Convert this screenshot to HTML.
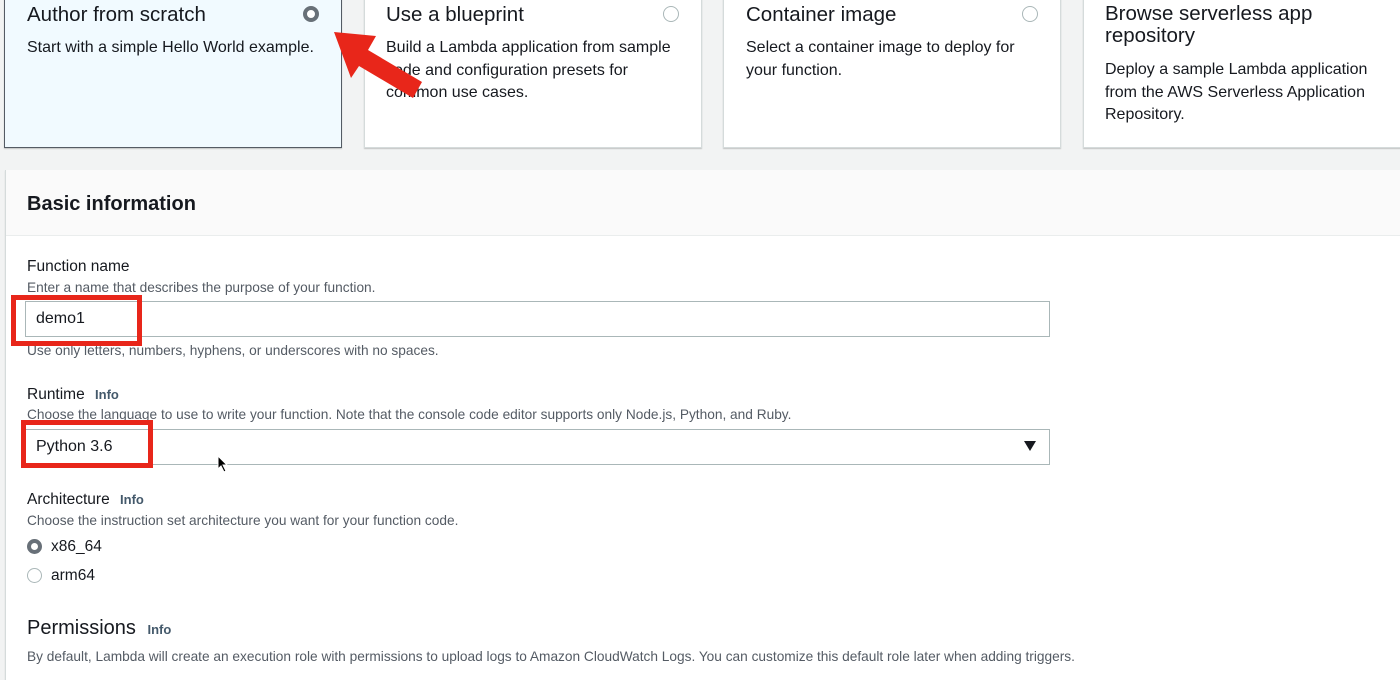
<!DOCTYPE html>
<html><head><style>
*{margin:0;padding:0;box-sizing:border-box}
body{width:1400px;height:671px;overflow:hidden;background:#f2f3f3;font-family:"Liberation Sans",sans-serif;color:#16191f;position:relative}
.a{position:absolute;white-space:nowrap}
.card{position:absolute;top:-10px;height:158px;background:#fff;border:1px solid #d5dbdb;box-shadow:0 1px 1px rgba(0,0,0,.2)}
.ct{font-size:20.5px;color:#16191f}
.cd{font-size:16px;line-height:22.5px;color:#16191f}
.rad{position:absolute;width:16px;height:16px;border-radius:50%;border:1.5px solid #aab7b8;background:#fff}
.rsel{border:4px solid #687078}
.lbl{font-size:15.5px;color:#16191f}
.hint{font-size:13.7px;color:#545b64}
.info{font-size:13px;font-weight:bold;color:#44596b}
.inp{position:absolute;left:25px;width:1025px;height:36px;border:1px solid #aab7b8;background:#fff}
.red{position:absolute;border:5px solid #e8261a}
</style></head><body>
<div class="card" style="left:4px;width:338px;background:#f1faff;border:1px solid #545b64"></div>
<div class="card" style="left:364px;width:338px"></div>
<div class="card" style="left:723px;width:338px"></div>
<div class="card" style="left:1083px;width:330px"></div>
<div class="a ct" style="left:27px;top:3px">Author from scratch</div>
<div class="rad rsel" style="left:303px;top:6px"></div>
<div class="a cd" style="left:27px;top:37px">Start with a simple Hello World example.</div>
<div class="a ct" style="left:386px;top:3px">Use a blueprint</div>
<div class="rad" style="left:663px;top:6px"></div>
<div class="a cd" style="left:386px;top:37px">Build a Lambda application from sample<br>code and configuration presets for<br>common use cases.</div>
<div class="a ct" style="left:746px;top:3px">Container image</div>
<div class="rad" style="left:1022px;top:6px"></div>
<div class="a cd" style="left:746px;top:37px">Select a container image to deploy for<br>your function.</div>
<div class="a ct" style="left:1105px;top:3px;line-height:22px">Browse serverless app<br>repository</div>
<div class="a cd" style="left:1105px;top:59px">Deploy a sample Lambda application<br>from the AWS Serverless Application<br>Repository.</div>

<div class="a" style="left:5px;top:170px;width:1400px;height:510px;background:#fff;border-left:1px solid #d5dbdb;box-shadow:0 1px 1px rgba(0,0,0,.15)"></div>
<div class="a" style="left:6px;top:170px;width:1400px;height:66px;background:#fafafa;border-bottom:1px solid #eaeded"></div>
<div class="a" style="left:27px;top:193px;font-size:20px;font-weight:bold">Basic information</div>

<div class="a lbl" style="left:27px;top:258px">Function name</div>
<div class="a hint" style="left:27px;top:280px">Enter a name that describes the purpose of your function.</div>
<div class="inp" style="top:301px"></div>
<div class="a" style="left:36px;top:310px;font-size:16px">demo1</div>
<div class="a hint" style="left:27px;top:343px">Use only letters, numbers, hyphens, or underscores with no spaces.</div>

<div class="a lbl" style="left:27px;top:386px">Runtime <span class="info" style="margin-left:6px">Info</span></div>
<div class="a hint" style="left:27px;top:407px">Choose the language to use to write your function. Note that the console code editor supports only Node.js, Python, and Ruby.</div>
<div class="inp" style="top:429px"></div>
<div class="a" style="left:36px;top:438px;font-size:16px">Python 3.6</div>
<div class="a" style="left:1024px;top:441px;width:0;height:0;border-left:6px solid transparent;border-right:6px solid transparent;border-top:10px solid #16191f"></div>
<svg class="a" style="left:217px;top:455px" width="12" height="18" viewBox="0 0 12 18"><path d="M1 1 L1 14 L4 11 L7 17 L9 16 L6 10 L10 10 Z" fill="#000" stroke="#fff" stroke-width="1"/></svg>

<div class="a lbl" style="left:27px;top:491px">Architecture <span class="info" style="margin-left:6px">Info</span></div>
<div class="a hint" style="left:27px;top:513px">Choose the instruction set architecture you want for your function code.</div>
<div class="rad rsel" style="left:27px;top:539px;width:15px;height:15px"></div>
<div class="a lbl" style="left:51px;top:538px">x86_64</div>
<div class="rad" style="left:27px;top:568px;width:15px;height:15px"></div>
<div class="a lbl" style="left:51px;top:567px">arm64</div>

<div class="a" style="left:27px;top:617px;font-size:20px">Permissions <span class="info" style="margin-left:6px">Info</span></div>
<div class="a hint" style="left:27px;top:649px">By default, Lambda will create an execution role with permissions to upload logs to Amazon CloudWatch Logs. You can customize this default role later when adding triggers.</div>

<div class="red" style="left:11px;top:295px;width:131px;height:51px"></div>
<div class="red" style="left:21px;top:420px;width:132px;height:48px"></div>
<svg class="a" style="left:320px;top:20px" width="120" height="90" viewBox="0 0 120 90"><path d="M14 12 L56 16 L48 30 L102 62 L93 78 L39 46 L31 58 Z" fill="#e8261a"/></svg>
</body></html>
